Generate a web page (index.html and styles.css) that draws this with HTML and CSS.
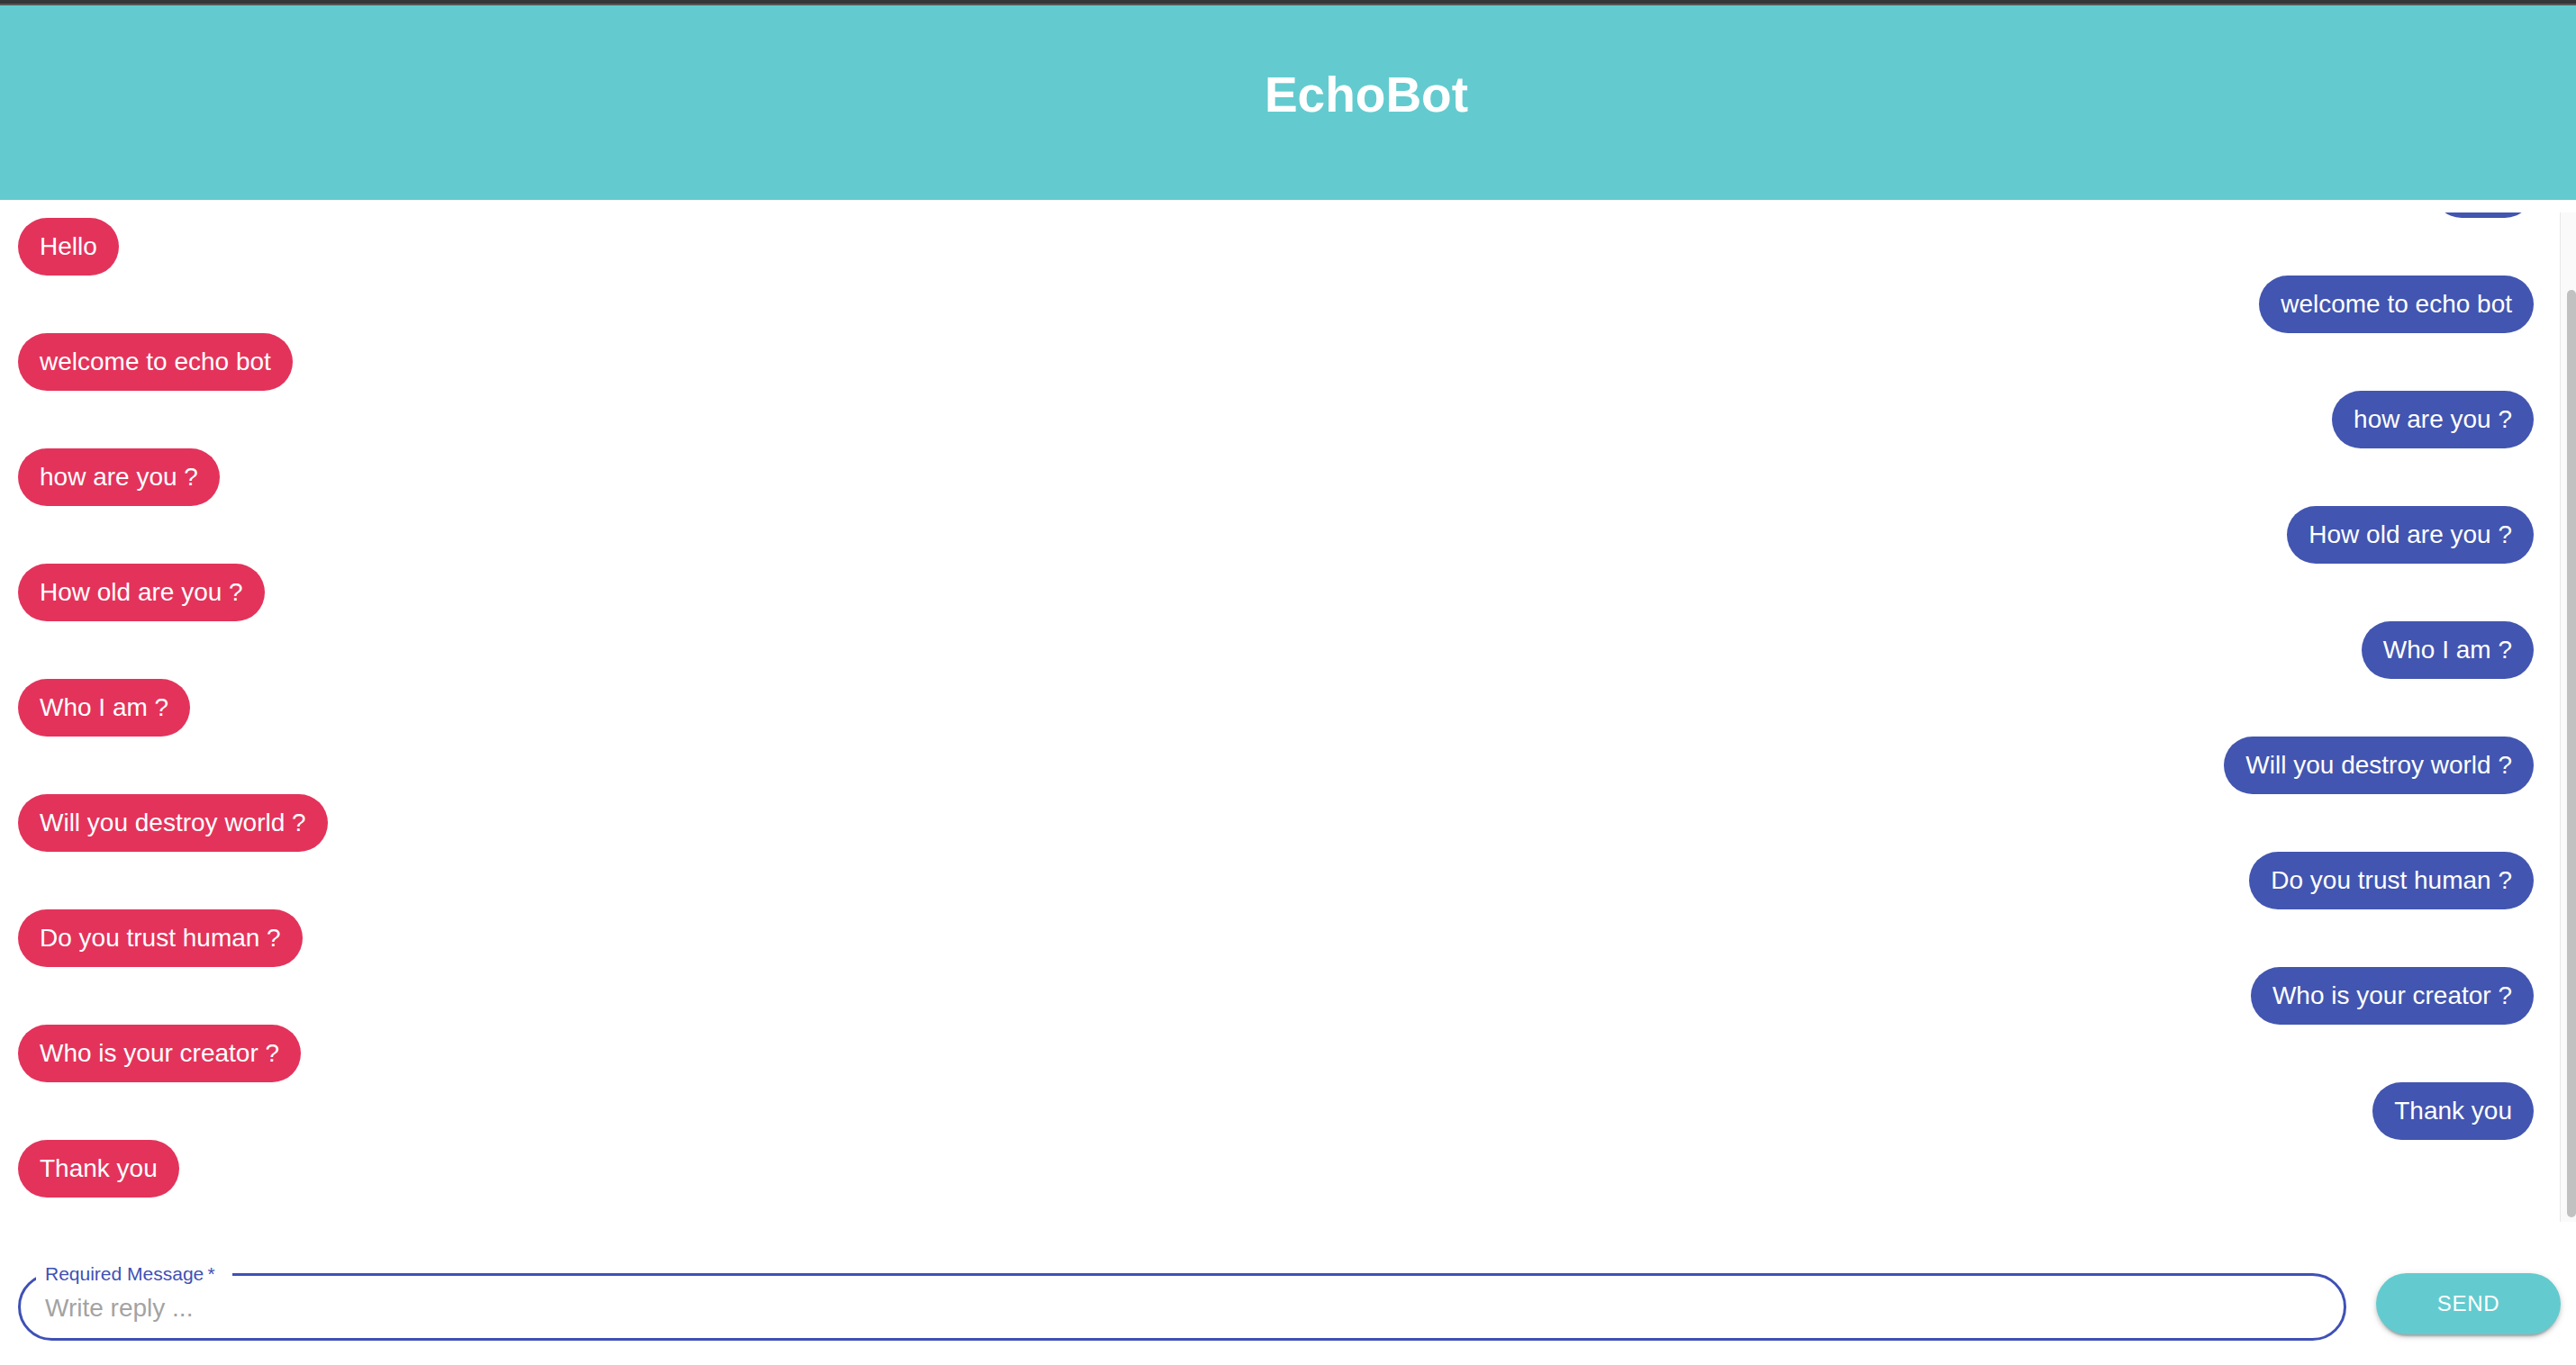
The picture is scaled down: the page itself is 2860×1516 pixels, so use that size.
FILE: index.html
```html
<!DOCTYPE html>
<html lang="en">
<head>
<meta charset="utf-8">
<title>EchoBot</title>
<link rel="stylesheet" href="styles.css">
</head>
<body>
<div class="app">
  <div class="topbar"></div>
  <header class="header"><h1 class="title">EchoBot</h1></header>
  <div class="chat-area">
    <main class="chat">
      <div class="thread">
        <div class="row user"><span class="bubble">Hello</span></div>
        <div class="row bot"><span class="bubble">Hello</span></div>
        <div class="row user"><span class="bubble">welcome to echo bot</span></div>
        <div class="row bot"><span class="bubble">welcome to echo bot</span></div>
        <div class="row user"><span class="bubble">how are you ?</span></div>
        <div class="row bot"><span class="bubble">how are you ?</span></div>
        <div class="row user"><span class="bubble">How old are you ?</span></div>
        <div class="row bot"><span class="bubble">How old are you ?</span></div>
        <div class="row user"><span class="bubble">Who I am ?</span></div>
        <div class="row bot"><span class="bubble">Who I am ?</span></div>
        <div class="row user"><span class="bubble">Will you destroy world ?</span></div>
        <div class="row bot"><span class="bubble">Will you destroy world ?</span></div>
        <div class="row user"><span class="bubble">Do you trust human ?</span></div>
        <div class="row bot"><span class="bubble">Do you trust human ?</span></div>
        <div class="row user"><span class="bubble">Who is your creator ?</span></div>
        <div class="row bot"><span class="bubble">Who is your creator ?</span></div>
        <div class="row user"><span class="bubble">Thank you</span></div>
        <div class="row bot"><span class="bubble">Thank you</span></div>
      </div>
    </main>
    <div class="scrollbar" aria-hidden="true"><div class="scrollbar-thumb"></div></div>
  </div>
  <footer class="composer">
    <fieldset class="field">
      <legend class="field-label">Required Message&thinsp;*</legend>
      <input class="field-input" type="text" placeholder="Write reply ..." autofocus>
    </fieldset>
    <button class="send" type="button">SEND</button>
  </footer>
</div>
</body>
</html>
```
FILE: styles.css
```css
html, body {
  margin: 0;
  padding: 0;
  height: 100%;
  background: #ffffff;
  font-family: "Liberation Sans", Arial, Helvetica, sans-serif;
}

.app {
  height: 100vh;
  display: flex;
  flex-direction: column;
}

.topbar {
  flex: none;
  height: 4px;
  background: #35363a;
  border-bottom: 2px solid #55565a;
}

.header {
  flex: none;
  height: 216px;
  box-sizing: border-box;
  padding-top: 72px;
  padding-left: 174px;
  background: #63cbcf;
  text-align: center;
}

.title {
  margin: 0;
  font-size: 55px;
  line-height: 55px;
  font-weight: 700;
  color: #ffffff;
}

.chat-area {
  flex: 1 1 0;
  min-height: 0;
  padding-top: 14px;
  display: flex;
}

.chat {
  flex: 1 1 auto;
  min-width: 0;
  overflow: hidden;
  display: flex;
  flex-direction: column-reverse;
}

.scrollbar {
  flex: none;
  width: 18px;
  box-sizing: border-box;
  padding: 86px 0 5px 7px;
  background: #fafafa;
  border-left: 1px solid #e8e8e8;
  display: flex;
}

.scrollbar-thumb {
  flex: 1;
  background: #c1c1c1;
  border-radius: 7px;
}

.thread {
  flex: none;
  padding: 46px 29px 27px 20px;
}

.row {
  display: flex;
  height: 64px;
}

.row.user {
  justify-content: flex-end;
}

.row.bot {
  justify-content: flex-start;
}

.bubble {
  height: 64px;
  line-height: 64px;
  padding: 0 24px;
  border-radius: 32px;
  color: #ffffff;
  font-size: 28px;
  white-space: nowrap;
}

.row.user .bubble {
  background: #4255b0;
}

.row.bot .bubble {
  background: #e3335b;
}

.composer {
  flex: none;
  height: 159px;
  box-sizing: border-box;
  padding: 46px 17px 0 20px;
  display: flex;
  align-items: flex-start;
  gap: 33px;
}

.field {
  flex: 1 1 auto;
  min-width: 0;
  margin: 0;
  padding: 0 27px 8px 27px;
  border: 3px solid #3f51b5;
  border-radius: 38px;
}

.field-label {
  margin-left: -10px;
  padding: 0 19px 0 10px;
  font-size: 21px;
  line-height: 24px;
  color: #3f51b5;
}

.field-input {
  display: block;
  width: 100%;
  height: 51px;
  padding: 0;
  border: none;
  outline: none;
  background: transparent;
  font-family: "Liberation Sans", Arial, Helvetica, sans-serif;
  font-size: 28px;
  color: #222222;
  caret-color: #000000;
}

.field-input::placeholder {
  color: #a3a3a3;
}

.send {
  flex: none;
  width: 205px;
  height: 68px;
  margin-top: 11px;
  border: none;
  border-radius: 34px;
  background: #63cbcf;
  color: #ffffff;
  font-family: "Liberation Sans", Arial, Helvetica, sans-serif;
  font-size: 24px;
  letter-spacing: 0.7px;
  box-shadow: 0 5px 2px -3px rgba(0, 0, 0, 0.2), 0 3px 4px 0 rgba(0, 0, 0, 0.14), 0 2px 9px 0 rgba(0, 0, 0, 0.12);
  cursor: pointer;
}
```
